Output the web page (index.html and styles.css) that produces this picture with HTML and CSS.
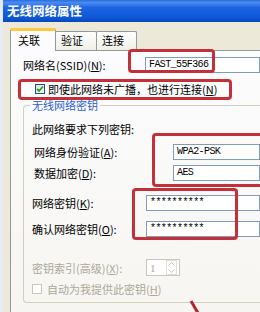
FILE: index.html
```
<!DOCTYPE html>
<html>
<head>
	<meta charset="UTF-8">
	<title>无线网络属性</title>
	<link rel="stylesheet" href="styles.css">
</head>
<body>
	<div class="win">
		<div class="titlebar">无线网络属性</div>
		<div class="client">
			<div class="tabs">
				<span class="tab on">关联</span>
				<span class="tab">验证</span>
				<span class="tab">连接</span>
			</div>
			<div class="panel">
				<div class="row ssid">
					<span class="label">网络名(SSID)(<u>N</u>):</span>
					<span class="field">FAST_55F366</span>
				</div>
				<div class="check">
					<span class="box checked">
						<svg width="8" height="8" viewBox="0 0 8 8"><path d="M1 4 L3 6 L7 1.5" fill="none" stroke="#21a121" stroke-width="1.8"/></svg>
					</span>
					<span>即使此网络未广播，也进行连接(<u>N</u>)</span>
				</div>
				<div class="group">
					<div class="legend">无线网络密钥</div>
					<div class="note">此网络要求下列密钥:</div>
					<div class="row auth">
						<span class="label">网络身份验证(<u>A</u>):</span>
						<span class="field">WPA2-PSK</span>
					</div>
					<div class="row enc">
						<span class="label">数据加密(<u>D</u>):</span>
						<span class="field">AES</span>
					</div>
					<div class="row key">
						<span class="label">网络密钥(<u>K</u>):</span>
						<span class="field">**********</span>
					</div>
					<div class="row key2">
						<span class="label">确认网络密钥(<u>O</u>):</span>
						<span class="field">**********</span>
					</div>
					<div class="row idx">
						<span class="label off">密钥索引(高级)(<u>X</u>):</span>
						<span class="spin">
							<span class="num">1</span>
							<span class="arrows">
								<svg width="7" height="4" viewBox="0 0 7 4"><path d="M0.5 3.5 L3.5 0.5 L6.5 3.5" fill="none" stroke="#c9c7ba" stroke-width="1"/></svg>
								<svg width="7" height="4" viewBox="0 0 7 4"><path d="M0.5 0.5 L3.5 3.5 L6.5 0.5" fill="none" stroke="#c9c7ba" stroke-width="1"/></svg>
							</span>
						</span>
					</div>
					<div class="check auto">
						<span class="box"></span>
						<span class="off">自动为我提供此密钥(<u>H</u>)</span>
					</div>
				</div>
			</div>
		</div>

		<!-- 红框标注 -->
		<div class="mark m1"></div>
		<div class="mark m2"></div>
		<div class="mark m3"></div>
		<div class="mark m4"></div>
		<svg class="arrow" width="12" height="14" viewBox="0 0 12 14"><path d="M2 1 L9 13" stroke="#b8232d" stroke-width="3"/></svg>
	</div>
</body>
</html>
```
FILE: styles.css
```
body{
	margin: 0;
	padding: 0;
	background: #ece9d8;
	font-family: "Noto Sans CJK SC", "Liberation Sans", sans-serif;
	font-size: 11px;
	color: #000;
}
.win{
	width: 260px;
	height: 312px;
	position: relative;
	overflow: hidden;
	border-left: 3px solid #e6ecf7;
	box-sizing: border-box;
}
.titlebar{
	height: 22px;
	line-height: 22px;
	padding-left: 4px;
	color: #fff;
	font-size: 12.5px;
	font-weight: bold;
	background: linear-gradient(#2a6de0 0%, #4a8cf0 12%, #1d63e0 35%, #0d58d8 80%, #0a47b8 100%);
	margin-left: -3px;
	padding-left: 7px;
}
.client{
	padding: 6px 0 0 7px;
}
.tabs{
	display: flex;
	align-items: flex-end;
	height: 22px;
}
.tab{
	box-sizing: border-box;
	height: 19px;
	line-height: 17px;
	padding-left: 5px;
	border: 1px solid #919b9c;
	border-bottom: none;
	border-radius: 2px 2px 0 0;
	background: linear-gradient(#fefefe, #f0efe7);
	width: 42px;
}
.tab + .tab{
	margin-left: -1px;
}
.tab:last-child{
	width: 41px;
}
.tab.on{
	height: 23px;
	width: 46px;
	margin-bottom: -1px;
	line-height: 19px;
	padding-left: 7px;
	border-top: 3px solid #ffc83c;
	background: #fcfcfe;
	position: relative;
	z-index: 1;
}
.panel{
	border: 1px solid #919b9c;
	border-right: none;
	height: 280px;
	padding-left: 12px;
	background: linear-gradient(#fcfcfe, #f6f5f0);
}
.row{
	display: flex;
	align-items: center;
	height: 16px;
}
.label{
	flex: none;
}
.field{
	box-sizing: border-box;
	height: 16px;
	flex: 1;
	border: 1px solid #7f9db9;
	background: #fff;
	font-family: "Liberation Mono", monospace;
	font-size: 10px;
	letter-spacing: -0.6px;
	line-height: 14px;
	padding-left: 3px;
}
.ssid{
	margin-top: 6px;
}
.ssid .label{
	width: 122px;
}
.check{
	display: flex;
	align-items: center;
	height: 10px;
	margin: 11px 0 0 12px;
	gap: 3px;
}
.box{
	box-sizing: border-box;
	width: 10px;
	height: 10px;
	border: 1px solid #1c5180;
	background: linear-gradient(135deg, #dcdcd7, #fff);
	display: flex;
	align-items: center;
	justify-content: center;
}
.group{
	margin-top: 11px;
	border: 1px solid #d0d0bf;
	border-right: none;
	border-radius: 4px 0 0 4px;
	padding: 0 0 8px 8px;
}
.legend{
	width: fit-content;
	margin: -7px 0 0 -2px;
	padding: 0 2px;
	line-height: 13px;
	color: #2b5ccf;
	background: #fcfcfe;
}
.note{
	margin-top: 10px;
	line-height: 14px;
}
.auth{
	margin-top: 8px;
}
.auth .label,.enc .label{
	width: 139px;
	padding-left: 2px;
}
.enc{
	margin-top: 5px;
}
.key{
	margin-top: 14px;
}
.key .label,.key2 .label,.idx .label{
	width: 114px;
}
.key2{
	margin-top: 10px;
}
.idx{
	margin-top: 22px;
	height: 17px;
}
.off{
	color: #aca899;
}
.spin{
	box-sizing: border-box;
	width: 34px;
	height: 17px;
	border: 1px solid #c9c7ba;
	background: #fff;
	display: flex;
	align-items: center;
	justify-content: space-between;
	padding: 0 2px 0 3px;
	color: #aca899;
	font-family: "Liberation Serif", serif;
}
.arrows{
	display: flex;
	flex-direction: column;
	gap: 3px;
	border: 1px solid #e2e0d6;
	padding: 1px 1px;
}
.auto{
	margin: 8px 0 0 0;
	gap: 5px;
}
.auto .box{
	border-color: #c9c7ba;
	background: #fff;
}
u{
	text-decoration: underline;
}
.mark{
	position: absolute;
	box-sizing: border-box;
	border: 3px solid #c3303a;
	border-radius: 4px;
}
.m1{
	left: 125px;
	top: 49px;
	width: 87px;
	height: 24px;
}
.m2{
	left: 15px;
	top: 79px;
	width: 214px;
	height: 21px;
}
.m3{
	left: 149px;
	top: 133px;
	width: 130px;
	height: 54px;
}
.m4{
	left: 129px;
	top: 188px;
	width: 106px;
	height: 52px;
}
.arrow{
	position: absolute;
	left: 186px;
	top: 300px;
}
```
